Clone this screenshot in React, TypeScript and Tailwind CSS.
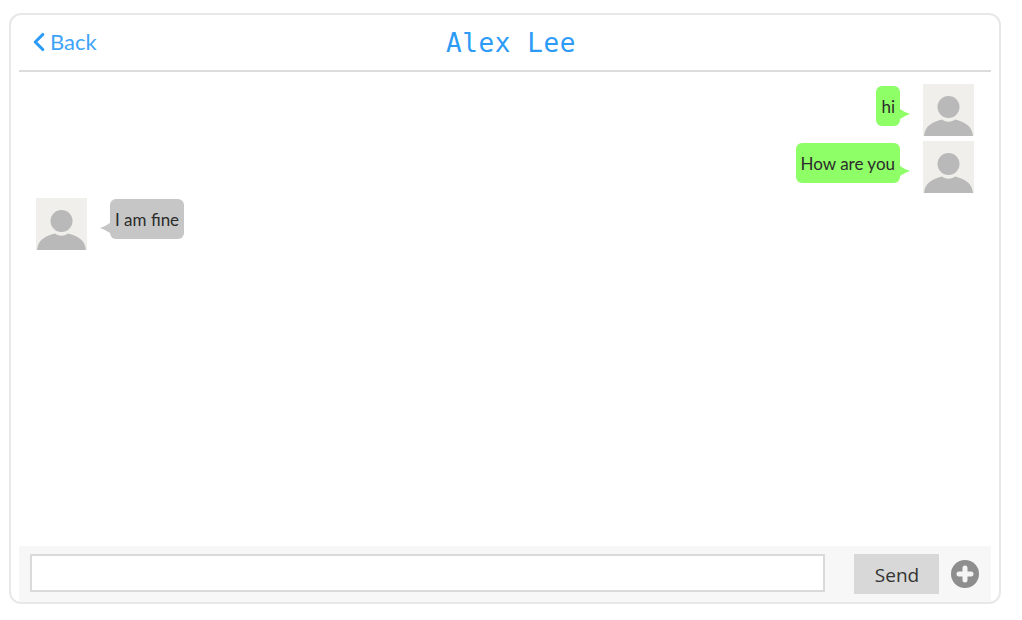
import { ChevronLeft } from 'lucide-react';

function Avatar() {
  return (
    <svg viewBox="0 0 51 52" className="h-[52px] w-[51px] shrink-0 bg-[#f0efeb]">
      <circle cx="25.5" cy="23" r="11" fill="#b8b9b8" />
      <path d="M1 52 C2 42 9 38 19 35.5 C23 38.5 28 38.5 32 35.5 C42 38 49 42 50 52 Z" fill="#b8b9b8" />
    </svg>
  );
}

function SentMessage({ text }: { text: string }) {
  return (
    <div className="flex justify-end">
      <div className="flex items-start">
        <div className="mt-[2px] flex h-[40px] items-center rounded-[6px] bg-[#8eff66] px-[5px] pt-[1px] text-[17px] text-[#2b2b2b]">
          {text}
        </div>
        <svg viewBox="0 0 10 10" className="mt-[25px] h-[10px] w-[10px]">
          <path d="M0 0 Q4 3 10 5 Q4 7 0 10 Z" fill="#8eff66" />
        </svg>
      </div>
      <div className="ml-[13px]">
        <Avatar />
      </div>
    </div>
  );
}

function ReceivedMessage({ text }: { text: string }) {
  return (
    <div className="flex">
      <Avatar />
      <div className="ml-[13px] flex items-start">
        <svg viewBox="0 0 10 10" className="mt-[25px] h-[10px] w-[10px]">
          <path d="M10 0 Q6 3 0 5 Q6 7 10 10 Z" fill="#c6c6c6" />
        </svg>
        <div className="mt-[1px] flex h-[40px] items-center rounded-[6px] bg-[#c6c6c6] px-[5px] pt-[1px] text-[17px] text-[#2b2b2b]">
          {text}
        </div>
      </div>
    </div>
  );
}

export default function App() {
  return (
    <div className="h-[620px] w-[1022px] bg-white px-[9px] pb-[16px] pt-[13px] font-['Lato',sans-serif]">
      <div className="mr-[12px] flex h-full flex-col rounded-[12px] border-2 border-[#e8e8e8] px-[8px]">
        <header className="relative flex h-[57px] shrink-0 items-center justify-center border-b-2 border-[#dcdcdc]">
          <a className="absolute left-[10px] top-[12px] flex items-center text-[22px] leading-[30px] text-[#3fa4f8]">
            <ChevronLeft size={30} strokeWidth={2.5} className="-ml-[5px] text-[#2b9bf6]" />
            <span className="-ml-[4px]">Back</span>
          </a>
          <h1 className="pl-[12px] pt-[2px] font-['DejaVu_Sans_Mono',monospace] text-[26px] tracking-[0.6px] text-[#2b9bf6]">
            Alex Lee
          </h1>
        </header>

        <main className="flex flex-1 flex-col gap-[5px] pl-[17px] pr-[17px] pt-[12px]">
          <SentMessage text="hi" />
          <SentMessage text="How are you" />
          <ReceivedMessage text="I am fine" />
        </main>

        <footer className="flex h-[56px] shrink-0 items-center bg-[#f7f7f7] pl-[11px]">
          <input className="mb-[2px] h-[38px] w-[795px] border-2 border-[#dadada] bg-white" />
          <button className="ml-[29px] h-[40px] w-[85px] bg-[#d8d8d8] pl-[1px] pt-[3px] font-['Open_Sans',sans-serif] text-[19px] text-[#333]">
            Send
          </button>
          <svg viewBox="0 0 28 28" className="ml-[12px] h-[28px] w-[28px]">
            <circle cx="14" cy="14" r="14" fill="#8e8e8e" />
            <path d="M14 8 V20 M8 14 H20" stroke="#f4f4f4" strokeWidth="5" strokeLinecap="round" />
          </svg>
        </footer>
      </div>
    </div>
  );
}
